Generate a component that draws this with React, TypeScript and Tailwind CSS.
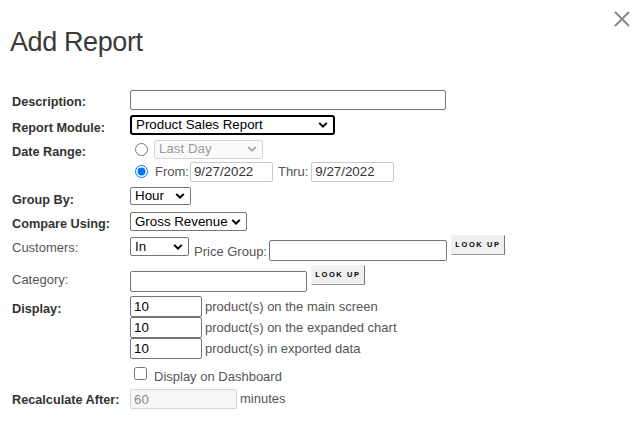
import type { ReactNode } from 'react';

const font = "font-['Liberation_Sans',Arial,sans-serif]";
const boldLabel = 'w-[118px] shrink-0 text-[12.7px] leading-[15px] font-bold text-[#333]';
const plainLabel = 'w-[118px] shrink-0 text-[13px] leading-[15px] text-[#555]';
const darkInput =
  'border border-[#767676] rounded-[2px] bg-white px-[3px] text-[13.33px] text-black outline-none';
const lightInput =
  'border border-[#c9c9c9] rounded-[2px] bg-white px-[3px] text-[13.33px] text-[#333] outline-none';

function Chevron({ color = '#000' }: { color?: string }) {
  return (
    <svg width="10" height="7" viewBox="0 0 10 7" className="pointer-events-none absolute right-[5px] top-1/2 -translate-y-1/2">
      <path d="M1.2 1.4 L5 5.2 L8.8 1.4" fill="none" stroke={color} strokeWidth="2" />
    </svg>
  );
}

function Select({
  value,
  className,
  disabled,
}: {
  value: string;
  className: string;
  disabled?: boolean;
}) {
  return (
    <div className={`relative ${className}`}>
      <div className="flex h-full items-center whitespace-nowrap pl-[4px] text-[13.33px]">{value}</div>
      <Chevron color={disabled ? '#a8a8a8' : '#000'} />
    </div>
  );
}

function LookUp() {
  return (
    <button className="flex h-[20px] w-[54px] items-center justify-center border border-t-[#f4f4f4] border-l-[#f4f4f4] border-r-[#767676] border-b-[#9a9a9a] bg-[#efefef] text-[7.5px] font-bold tracking-[1.6px] text-black">
      LOOK UP
    </button>
  );
}

function Row({ h, children }: { h: string; children: ReactNode }) {
  return <div className={`flex ${h}`}>{children}</div>;
}

export default function App() {
  return (
    <div className={`h-[421px] w-[642px] overflow-hidden bg-white ${font}`}>
      <div className="flex items-start justify-between">
        <h1 className="pl-[10px] pt-[29px] text-[27px] leading-[27px] tracking-[-0.4px] text-[#3a3a3a]">
          Add Report
        </h1>
        <svg width="18" height="18" viewBox="0 0 18 18" className="mr-[11px] mt-[10px]">
          <path d="M2 2 L16 16 M16 2 L2 16" stroke="#8a8a8a" strokeWidth="2" />
        </svg>
      </div>

      <div className="pl-[12px] pt-[34px]">
        <Row h="h-[25px]">
          <div className={`${boldLabel} pt-[5px]`}>Description:</div>
          <input className={`${darkInput} h-[20px] w-[316px]`} />
        </Row>

        <Row h="h-[25px]">
          <div className={`${boldLabel} pt-[6px]`}>Report Module:</div>
          <Select
            value="Product Sales Report"
            className="h-[20px] w-[205px] rounded-[3px] border-2 border-black text-black"
          />
        </Row>

        <Row h="h-[46px]">
          <div className={`${boldLabel} pt-[5px]`}>Date Range:</div>
          <div className="flex flex-col">
            <div className="flex h-[18px] items-center">
              <input type="radio" name="range" className="ml-[5px] h-[13px] w-[13px]" />
              <Select
                value="Last Day"
                disabled
                className="ml-[6px] h-[19px] w-[109px] rounded-[2px] border border-[#d4d4d4] bg-[#fafafa] text-[#9a9a9a]"
              />
            </div>
            <div className="mt-[4px] flex h-[19px] items-center text-[13px] text-[#555]">
              <input type="radio" name="range" defaultChecked className="ml-[5px] h-[13px] w-[13px]" />
              <span className="ml-[7px]">From:</span>
              <input defaultValue="9/27/2022" className={`${lightInput} ml-[1px] h-[20px] w-[83px]`} />
              <span className="ml-[5px]">Thru:</span>
              <input defaultValue="9/27/2022" className={`${lightInput} ml-[3px] h-[20px] w-[83px]`} />
            </div>
          </div>
        </Row>

        <Row h="h-[25px]">
          <div className={`${boldLabel} pt-[7px]`}>Group By:</div>
          <Select value="Hour" className="mt-[1px] h-[18px] w-[61px] rounded-[2px] border border-[#767676]" />
        </Row>

        <Row h="h-[24px]">
          <div className={`${boldLabel} pt-[6px]`}>Compare Using:</div>
          <Select value="Gross Revenue" className="mt-[1px] h-[19px] w-[117px] rounded-[2px] border border-[#767676]" />
        </Row>

        <Row h="h-[30px]">
          <div className={`${plainLabel} pt-[5px]`}>Customers:</div>
          <div className="flex items-start">
            <Select value="In" className="mt-[2px] h-[19px] w-[59px] rounded-[2px] border border-[#767676]" />
            <span className="ml-[5px] mt-[9px] text-[13px] leading-[15px] text-[#555]">Price Group:</span>
            <input className={`${darkInput} ml-[2px] mt-[5px] h-[21px] w-[178px]`} />
            <div className="ml-[4px]">
              <LookUp />
            </div>
          </div>
        </Row>

        <Row h="h-[31px]">
          <div className={`${plainLabel} pt-[7px]`}>Category:</div>
          <div className="flex items-start">
            <input className={`${darkInput} mt-[6px] h-[21px] w-[177px]`} />
            <div className="ml-[4px]">
              <LookUp />
            </div>
          </div>
        </Row>

        <Row h="h-[71px]">
          <div className={`${boldLabel} pt-[6px]`}>Display:</div>
          <div className="flex flex-col text-[13px] text-[#555]">
            {['product(s) on the main screen', 'product(s) on the expanded chart', 'product(s) in exported data'].map(
              (t) => (
                <div key={t} className="flex h-[21px] items-center">
                  <input defaultValue="10" className={`${darkInput} h-[21px] w-[72px]`} />
                  <span className="ml-[3px]">{t}</span>
                </div>
              ),
            )}
          </div>
        </Row>

        <Row h="h-[22px]">
          <div className="w-[118px] shrink-0" />
          <div className="flex items-start">
            <input type="checkbox" className="ml-[4px] h-[13px] w-[13px]" />
            <span className="ml-[7px] mt-[2px] text-[13px] leading-[15px] text-[#555]">Display on Dashboard</span>
          </div>
        </Row>

        <Row h="h-[20px]">
          <div className={`${boldLabel} pt-[4px]`}>Recalculate After:</div>
          <div className="flex items-center">
            <input
              disabled
              defaultValue="60"
              className="h-[20px] w-[107px] rounded-[2px] border border-[#d6d6d6] bg-[#f6f6f6] px-[3px] text-[13.33px] text-[#8a8a8a]"
            />
            <span className="ml-[3px] text-[13px] text-[#555]">minutes</span>
          </div>
        </Row>
      </div>
    </div>
  );
}
